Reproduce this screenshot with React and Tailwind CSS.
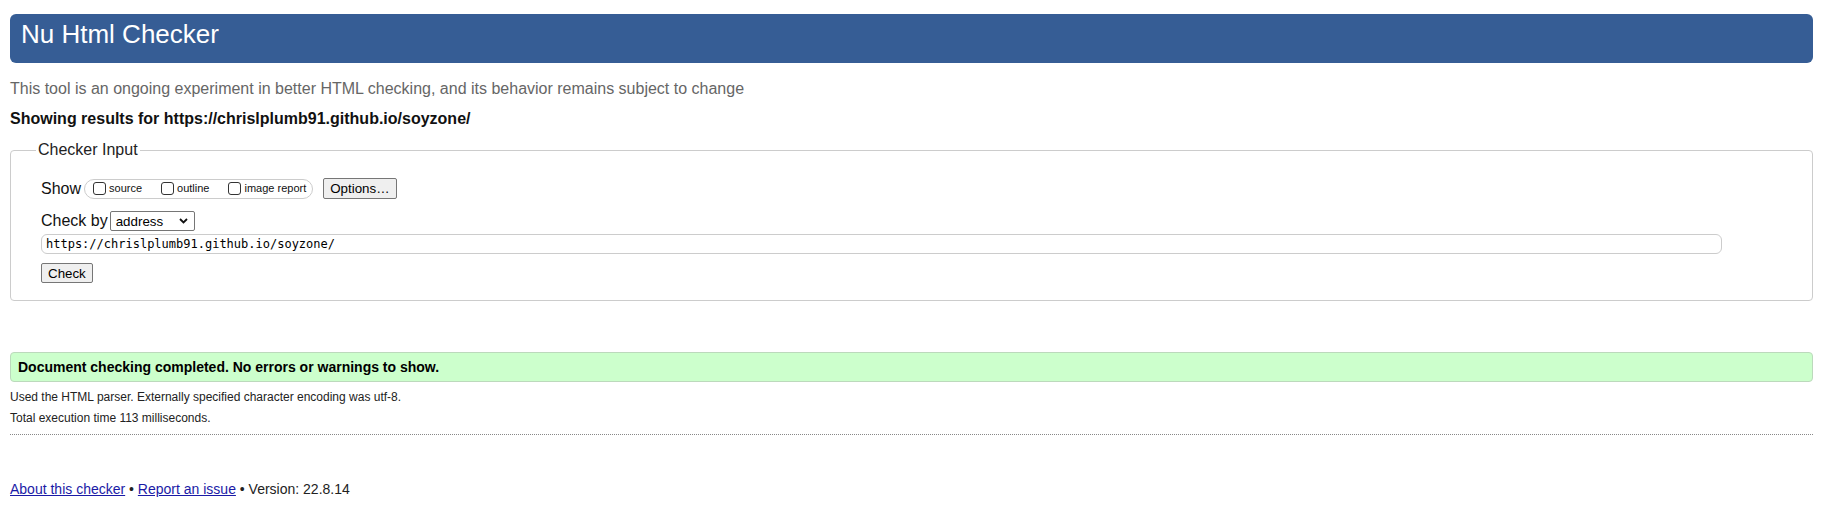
import React from "react";

function Box({ label }) {
  return (
    <span className="flex items-center">
      <span className="inline-block w-[13px] h-[13px] rounded-[3px] border border-[#333] bg-white"></span>
      <span className="ml-[3px] text-[11px] leading-[13px] text-[#111]">{label}</span>
    </span>
  );
}

export default function App() {
  return (
    <div className="w-[1825px] h-[514px] bg-white pl-[10px] pr-[12px] pt-[14px] font-['Liberation_Sans',Arial,sans-serif] text-[#111]">
      <div className="h-[49px] rounded-[6px] bg-[#365d95] text-white text-[26px] leading-[30px] pl-[11px] pt-[5px]">
        Nu Html Checker
      </div>
      <p className="mt-[17px] text-[16px] leading-[18px] text-[#666]">
        This tool is an ongoing experiment in better HTML checking, and its behavior remains subject to change
      </p>
      <p className="mt-[12px] text-[16px] leading-[18px] font-bold text-[#111]">
        Showing results for https://chrislplumb91.github.io/soyzone/
      </p>
      <fieldset className="mt-[12px] border border-[#ccc] rounded-[4px] p-0 m-0 min-w-0">
        <legend className="ml-[25px] px-[2px] text-[16px] leading-[20px] text-[#222]">Checker Input</legend>
        <div className="pl-[30px] pt-[18px] pb-[17px]">
          <div className="flex items-center h-[21px]">
            <span className="text-[16px] leading-[18px]">Show</span>
            <span className="ml-[3px] flex items-center h-[20px] rounded-full border border-[#ccc] pl-[8px] pr-[6px]">
              <Box label="source" />
              <span className="w-[19px]"></span>
              <Box label="outline" />
              <span className="w-[19px]"></span>
              <Box label="image report" />
            </span>
            <button className="ml-[10px] h-[21px] px-[6px] bg-[#efefef] border border-[#767676] rounded-[2px] text-[13.33px] leading-[15px] text-black font-['Liberation_Sans',Arial,sans-serif]">
              Options…
            </button>
          </div>
          <div className="mt-[12px] flex items-center h-[20px]">
            <span className="text-[16px] leading-[18px]">Check by</span>
            <span className="ml-[2px] flex items-center justify-between w-[85px] h-[20px] border border-[#767676] rounded-[2px] bg-white pl-[5px] pr-[6px]">
              <span className="text-[13.33px] leading-[15px] text-black">address</span>
              <svg width="9" height="6" viewBox="0 0 9 6" className="block">
                <polyline points="1,1 4.5,4.5 8,1" fill="none" stroke="#111" strokeWidth="1.8" />
              </svg>
            </span>
          </div>
          <div className="mt-[3px] w-[1681px] h-[20px] border border-[#ccc] rounded-[6px] flex items-center pl-[4px] font-['DejaVu_Sans_Mono','Liberation_Mono',monospace] text-[12px] leading-[14px] text-black">
            https://chrislplumb91.github.io/soyzone/
          </div>
          <button className="mt-[9px] block h-[20px] px-[6px] bg-[#efefef] border border-[#767676] rounded-[2px] text-[13.33px] leading-[15px] text-black font-['Liberation_Sans',Arial,sans-serif]">
            Check
          </button>
        </div>
      </fieldset>
      <div className="mt-[51px] h-[30px] border border-[#bcd9bc] rounded-[4px] bg-[#ccffcc] pl-[7px] pt-[6px] text-[14px] leading-[16px] font-bold text-black">
        Document checking completed. No errors or warnings to show.
      </div>
      <p className="mt-[8px] text-[12px] leading-[14px] text-[#222]">
        Used the HTML parser. Externally specified character encoding was utf-8.
      </p>
      <p className="mt-[7px] text-[12px] leading-[14px] text-[#222]">
        Total execution time 113 milliseconds.
      </p>
      <div className="mt-[9px] border-t border-dotted border-[#888]"></div>
      <p className="mt-[46px] text-[14px] leading-[16px] text-[#222]">
        <a className="text-[#1a1aa6] underline">About this checker</a>
        {" • "}
        <a className="text-[#1a1aa6] underline">Report an issue</a>
        {" • Version: 22.8.14"}
      </p>
    </div>
  );
}
